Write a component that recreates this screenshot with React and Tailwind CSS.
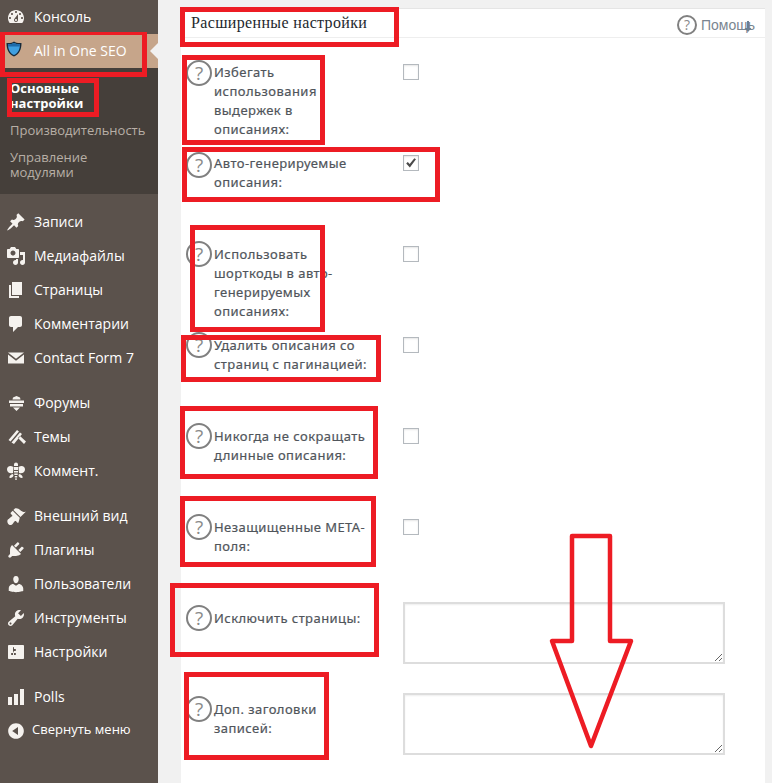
const P = {
  dash: "M3.76 16h12.48c1.1-1.37 1.76-3.11 1.76-5 0-4.42-3.58-8-8-8s-8 3.58-8 8c0 1.89.66 3.63 1.76 5zM10 4c.55 0 1 .45 1 1s-.45 1-1 1-1-.45-1-1 .45-1 1-1zM6 6c.55 0 1 .45 1 1s-.45 1-1 1-1-.45-1-1 .45-1 1-1zm8 0c.55 0 1 .45 1 1s-.45 1-1 1-1-.45-1-1 .45-1 1-1zm-5.37 5.55L12 7v6c0 1.1-.9 2-2 2s-2-.9-2-2c0-.57.24-1.08.63-1.45zM4 10c.55 0 1 .45 1 1s-.45 1-1 1-1-.45-1-1 .45-1 1-1zm12 0c.55 0 1 .45 1 1s-.45 1-1 1-1-.45-1-1 .45-1 1-1zm-5 3c0-.55-.45-1-1-1s-1 .45-1 1 .45 1 1 1 1-.45 1-1z",
  post: "M10.44 3.02l1.82-1.82 6.36 6.35-1.83 1.82c-1.05-.68-2.48-.57-3.41.36l-.75.75c-.92.93-1.04 2.35-.35 3.41l-1.83 1.82-2.41-2.41-2.8 2.79c-.42.42-3.38 2.71-3.8 2.29s1.86-3.39 2.28-3.81l2.79-2.79L4.1 9.36l1.83-1.82c1.05.69 2.48.57 3.4-.36l.75-.75c.93-.92 1.05-2.35.36-3.41z",
  media: "M13 11V4c0-.55-.45-1-1-1h-1.67L9 1H5L3.67 3H2c-.55 0-1 .45-1 1v7c0 .55.45 1 1 1h10c.55 0 1-.45 1-1zM7 4.5c1.38 0 2.5 1.12 2.5 2.5S8.38 9.5 7 9.5 4.5 8.38 4.5 7 5.62 4.5 7 4.5zM14 6h5v10.5c0 1.38-1.12 2.5-2.5 2.5S14 17.88 14 16.5s1.12-2.5 2.5-2.5c.17 0 .34.02.5.05V9h-3V6zm-4 8.05V13h2v3.5c0 1.38-1.12 2.5-2.5 2.5S7 17.88 7 16.5 8.12 14 9.5 14c.17 0 .34.02.5.05z",
  page: "M6 15V2h10v13H6zm-1 1h8v2H3V5h2v11z",
  comments: "M5 2h9c1.1 0 2 .9 2 2v7c0 1.1-.9 2-2 2h-2l-5 5v-5H5c-1.1 0-2-.9-2-2V4c0-1.1.9-2 2-2z",
  mail: "M2 4.500H18L10 10.800ZM2 6.500V15.500H18V6.500L10 12.800Z",
  forum: "M10.500 3L14 4.500L14.500 6.500H6.500L7 4.500ZM3 7.500H18V10H3ZM4 11H17V13.500H4ZM7 14.500H14L10.500 18Z",
  theme: "M2.500 13L11 3L13 4.500L4.500 14.500ZM5.500 15.500L14 5.500L16 7L8 17ZM12 11L14 9L20 14.500L18 17Z",
  bee: "M8 3.500a2 2 0 0 1 4 0V5H8ZM7.500 6C4 4 1 5.500 1 8.500C1 11.500 4 13 7 12ZM12.500 6C16 4 19 5.500 19 8.500C19 11.500 16 13 13 12ZM8 6H12V9H8ZM8 10H12V11.500H8ZM8.300 12.500H11.700V14H8.300ZM7 13C4.500 13.500 3 15 3.500 17C5.500 17.500 7 16 7.500 14.500ZM13 13C15.500 13.500 17 15 16.500 17C14.500 17.500 13 16 12.500 14.500ZM8.800 15H11.200V16.500H8.800ZM9.300 17.300H10.700V19H9.300Z",
  brush: "M14.48 11.06L7.41 3.99l1.5-1.5c.5-.56 2.3-.47 3.51.32 1.21.8 1.43 1.28 2.91 2.1 1.18.64 2.45 1.26 4.45.85zm-.71.71L6.7 4.7 4.93 6.47c-.39.39-.39 1.02 0 1.41l1.06 1.06c.39.39.39 1.03 0 1.42-.6.6-1.43 1.11-2.21 1.69-.35.26-.7.53-1.01.84C1.43 13.23.91 15.04 1.72 17c.8 1.96 2.58 2.47 3.93 1.75.55-.29.97-.7 1.34-1.17.58-.78 1.09-1.61 1.69-2.21.39-.39 1.02-.39 1.41 0l1.06 1.06c.39.39 1.02.39 1.41 0z",
  plugin: "M13.11 4.36L9.87 7.6 8 5.73l3.24-3.24c.35-.34 1.05-.2 1.56.32.52.51.66 1.21.31 1.55zm-8 1.77l.91-1.12 9.01 9.01-1.19.84c-.71.71-2.63 1.16-3.82 1.16H6.14L4.9 17.26c-.59.59-1.54.59-2.12 0-.59-.58-.59-1.53 0-2.12l1.24-1.24v-3.88c0-1.13.4-3.19 1.09-3.89zm7.26 3.97l3.24-3.24c.34-.35 1.04-.21 1.55.31.52.51.66 1.21.31 1.55l-3.24 3.25z",
  users: "M10 9.25c-2.27 0-2.73-3.44-2.73-3.44C7 4.02 7.82 2 9.97 2c2.16 0 2.98 2.02 2.71 3.81 0 0-.41 3.44-2.68 3.44zm0 2.57L12.72 10c2.39 0 4.52 2.33 4.52 4.53v2.49s-3.65 1.13-7.24 1.13c-3.65 0-7.24-1.13-7.24-1.13v-2.49c0-2.25 1.94-4.48 4.47-4.48z",
  tools: "M16.68 9.77c-1.34 1.34-3.3 1.67-4.95.99l-5.41 6.52c-.99.99-2.59.99-3.58 0s-.99-2.59 0-3.57l6.52-5.42c-.68-1.65-.35-3.61.99-4.95 1.28-1.28 3.12-1.62 4.72-1.06l-2.89 2.89 2.82 2.82 2.86-2.87c.53 1.58.18 3.39-1.08 4.65zM3.81 16.21c.4.39 1.04.39 1.43 0 .4-.4.4-1.04 0-1.43-.39-.4-1.03-.4-1.43 0-.39.39-.39 1.03 0 1.43z",
  settings: "M18 16V4c0-.55-.45-1-1-1H3c-.55 0-1 .45-1 1v12c0 .55.45 1 1 1h14c.55 0 1-.45 1-1zM8 11h1c.55 0 1 .45 1 1s-.45 1-1 1H8v1.5c0 .28-.22.5-.5.5s-.5-.22-.5-.5V13H6c-.55 0-1-.45-1-1s.45-1 1-1h1V5.5c0-.28.22-.5.5-.5s.5.22.5.5V7h1c.55 0 1 .45 1 1s-.45 1-1 1h-1v5.5c0 .28-.22.5-.5.5s-.5-.22-.5-.5V9z",
  bars: "M18 18V2h-4v16h4zm-6 0V7H8v11h4zm-6 0v-8H2v8h4z",
  collapse: "M10 2.16c4.33 0 7.84 3.51 7.84 7.84s-3.51 7.84-7.84 7.84S2.16 14.33 2.16 10 5.71 2.16 10 2.16zm2 11.72V6.12L6.18 9.97z",
};

function Ico({ d }) {
  return (
    <svg viewBox="0 0 20 20" className="w-5 h-5 shrink-0 ml-[6px] text-[#f5f2ee]" fill="currentColor" fillRule="evenodd">
      <path d={d} />
    </svg>
  );
}

function Item({ d, label, small }) {
  return (
    <div className="h-[34px] flex items-center text-white">
      <Ico d={d} />
      <span className={small ? "ml-[6px] text-[13px] pb-[2px]" : "ml-2 text-[14px] pb-[2px]"}>{label}</span>
    </div>
  );
}

function Sidebar() {
  return (
    <div className="w-[158px] shrink-0 bg-[#5b524c] font-['Open_Sans',sans-serif]">
      <Item d={P.dash} label="Консоль" />
      <div className="relative h-[34px] bg-[#c6a58a] flex items-center text-white text-[14px]">
        <svg viewBox="0 0 16 16" className="w-4 h-4 ml-[6px] mb-[4px] shrink-0">
          <path d="M8 .5c2 1.300 4.500 1.700 7.500 1.400 0 6-1.800 11-7.500 13.600C2.300 12.900.5 7.900.5 1.900 3.500 2.200 6 1.800 8 .5z" fill="#16293a" />
          <path d="M8 2c1.800 1 3.800 1.400 6 1.300-.1 4.800-1.600 8.700-6 10.800C3.600 12 2.100 8.100 2 3.300 4.200 3.400 6.200 3 8 2z" fill="#3f9fe0" />
          <path d="M8 2c1.800 1 3.800 1.400 6 1.300 0 .8-.1 1.500-.2 2.200H2.200C2.100 4.800 2 4.100 2 3.300 4.200 3.400 6.200 3 8 2z" fill="#1f6aa8" />
        </svg>
        <span className="ml-3 pb-[2px]">All in One SEO</span>
        <div className="absolute right-0 top-[9px] border-y-8 border-r-8 border-y-transparent border-r-[#f1f1f1]" />
      </div>
      <div className="h-[126px] bg-[#453f3a] pl-[10px] pt-[13px] text-[13px] leading-[15px] text-[#b8afa6]">
        <div className="font-bold text-white">Основные<br />настройки</div>
        <div className="mt-[12px]">Производительность</div>
        <div className="mt-[12px]">Управление<br />модулями</div>
      </div>
      <div className="mt-[11px]">
        <Item d={P.post} label="Записи" />
        <Item d={P.media} label="Медиафайлы" />
        <Item d={P.page} label="Страницы" />
        <Item d={P.comments} label="Комментарии" />
        <Item d={P.mail} label="Contact Form 7" />
      </div>
      <div className="mt-[11px]">
        <Item d={P.forum} label="Форумы" />
        <Item d={P.theme} label="Темы" />
        <Item d={P.bee} label="Коммент." />
      </div>
      <div className="mt-[11px]">
        <Item d={P.brush} label="Внешний вид" />
        <Item d={P.plugin} label="Плагины" />
        <Item d={P.users} label="Пользователи" />
        <Item d={P.tools} label="Инструменты" />
        <Item d={P.settings} label="Настройки" />
      </div>
      <div className="mt-[11px]">
        <Item d={P.bars} label="Polls" />
        <Item d={P.collapse} label="Свернуть меню" small />
      </div>
    </div>
  );
}

function Q({ small }) {
  return (
    <div className={`${small ? "w-[20px] h-[20px] text-[14px]" : "w-[26px] h-[26px] text-[19px]"} border-2 shrink-0 rounded-full border-[#808080] flex items-center justify-center text-[#8a8a8a] font-['Open_Sans',sans-serif]`}>?</div>
  );
}

function Check({ on }) {
  return (
    <div className="mt-2 w-4 h-4 border border-[#b4b9be] bg-white shadow-[inset_0_1px_2px_rgba(0,0,0,0.1)] flex items-center justify-center">
      {on && (
        <svg viewBox="0 0 16 16" className="w-[14px] h-[14px]"><path d="M2.500 8.500l1.800-1.600 2.200 2.300L11.800 2.500l1.900 1.300L6.700 13z" fill="#4a4a4a" /></svg>
      )}
    </div>
  );
}

function Row({ label, on, area, top = "mt-[3px]" }) {
  return (
    <div className="h-[91px] flex pl-[5px]">
      <div className={top}><Q /></div>
      <div className="ml-[2px] w-[189px] shrink-0">
        <div className="w-[155px] pt-[7px] text-[13px] leading-[19px] font-normal tracking-[0.45px] text-[#50555b] [-webkit-text-stroke:0.2px_#50555b]">{label}</div>
      </div>
      {area ? (
        <textarea readOnly className="w-[322px] h-[62px] border-2 border-[#dddddd] bg-white shadow-[inset_0_1px_2px_rgba(0,0,0,0.07)]" />
      ) : (
        <Check on={on} />
      )}
    </div>
  );
}

const rects = [
  [7, 78, 99, 117], [180, 7, 399, 47], [182, 55, 325, 145], [182, 147, 440, 202],
  [190, 225, 325, 332], [181, 335, 381, 382], [180, 406, 378, 479], [180, 496, 376, 567],
  [170, 583, 379, 657], [184, 672, 329, 760],
];

function Notes() {
  return (
    <svg className="absolute inset-0 w-[772px] h-[783px] pointer-events-none" viewBox="0 0 772 783" fill="none" stroke="#ed1c24">
      <path d="M0 32H147V77H0ZM5 35V72H142V35Z" fill="#ed1c24" fillRule="evenodd" stroke="none" />
      {rects.map(([a, b, c, d], i) => (
        <rect key={i} x={a + 2.500} y={b + 2.500} width={c - a - 5} height={d - b - 5} strokeWidth="5" />
      ))}
      <path d="M572 536H610V641H631L591 746L552 641H572Z" strokeWidth="4.500" strokeLinejoin="round" />
    </svg>
  );
}

export default function App() {
  return (
    <div className="relative flex w-[772px] h-[783px] overflow-hidden bg-[#f1f1f1]">
      <Sidebar />
      <div className="flex-1 pl-[23px] pr-[7px] pt-2">
        <div className="h-[800px] bg-white border-t border-[#e5e5e5]">
          <div className="h-[29px] flex items-center justify-between border-b border-[#eeeeee] pl-[10px]">
            <span className="font-['Liberation_Serif',serif] text-[16px] tracking-[0.35px] text-[#23282d]">Расширенные настройки</span>
            <div className="flex items-center gap-[4px] mt-[3px] pr-[10px] font-['Liberation_Sans',sans-serif] text-[14px] text-[#7a8590]">
              <Q small />
              <span className="relative pt-[1px]">
                Помощь
                <svg viewBox="0 0 8 11" className="absolute right-[3px] top-[7px] w-2 h-[11px]">
                  <path d="M3 0H5V7H7.500L4 11L.5 7H3Z" fill="#6c7f92" />
                </svg>
              </span>
            </div>
          </div>
          <div className="pt-[18px]">
            <Row top="mt-1" label="Избегать использования выдержек в описаниях:" />
            <Row top="mt-[5px]" label="Авто-генерируемые описания:" on />
            <Row label="Использовать шорткоды в авто-генерируемых описаниях:" />
            <Row label="Удалить описания со страниц с пагинацией:" />
            <Row label="Никогда не сокращать длинные описания:" />
            <Row label="Незащищенные МЕТА-поля:" />
            <Row label="Исключить страницы:" area />
            <Row label="Доп. заголовки записей:" area />
          </div>
        </div>
      </div>
      <Notes />
    </div>
  );
}
